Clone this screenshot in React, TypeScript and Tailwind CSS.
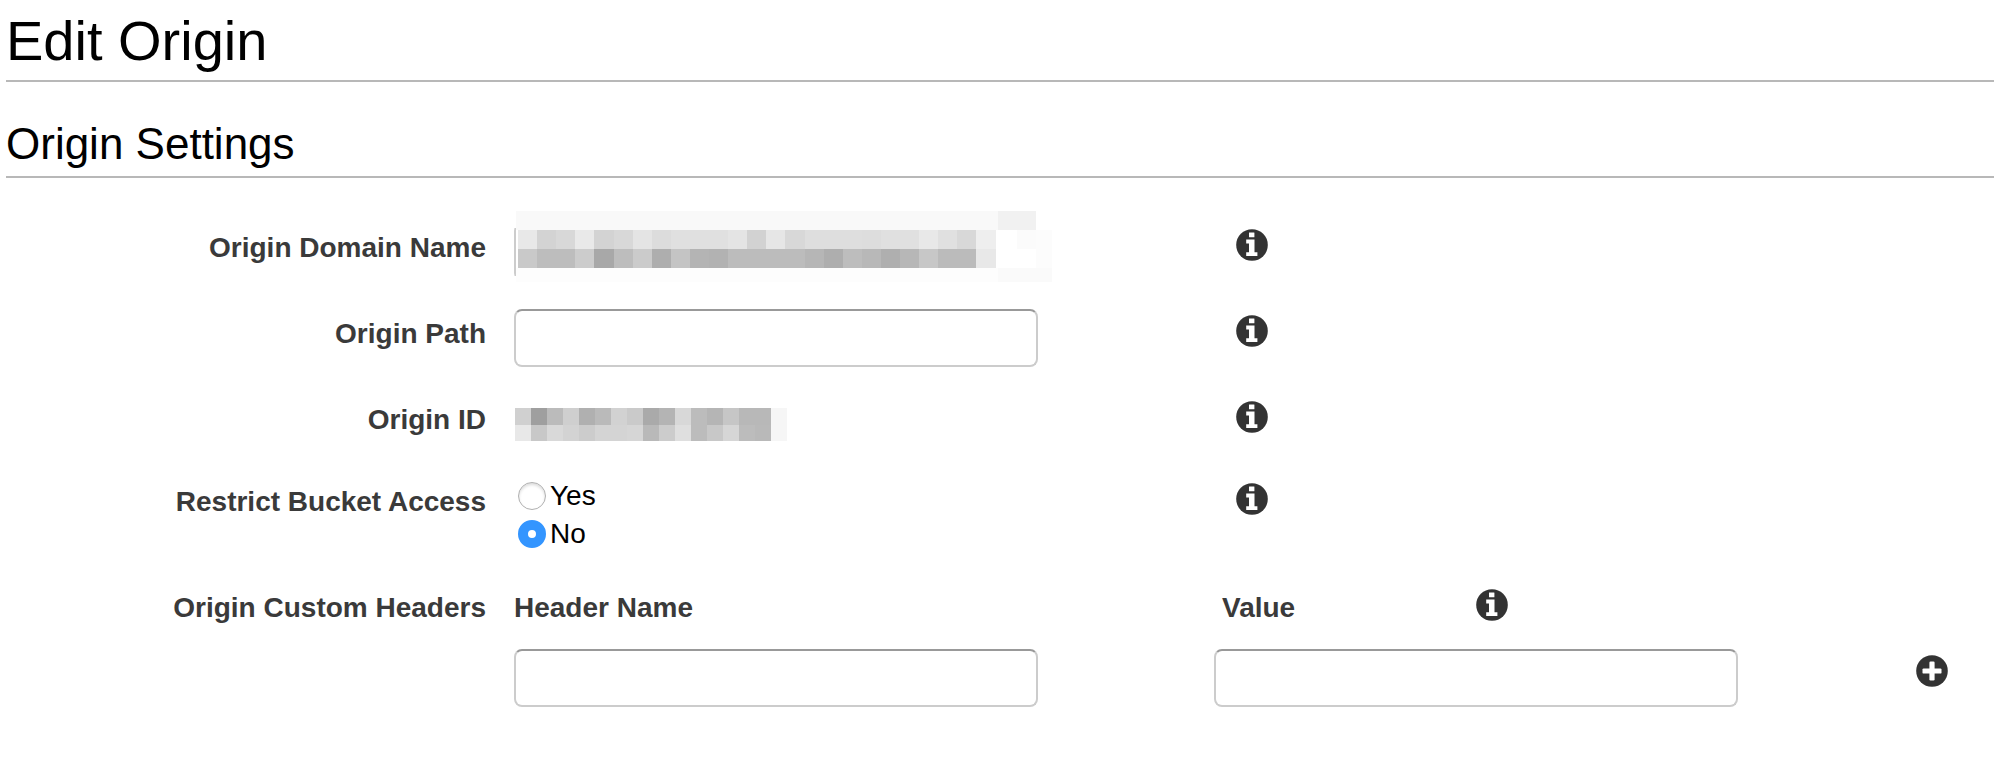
import React, { useState } from "react";

const domainCells = [
  ["e8", "d3", "d8", "e9", "d3", "d8", "e4", "dc", "e0", "e0", "e0", "e4", "d2", "e6", "d8", "de", "de", "de", "dd", "e0", "e0", "e8", "e0", "d8", "ee"],
  ["c9", "bd", "bd", "cc", "a8", "bd", "cb", "ae", "c4", "b4", "b2", "bc", "bc", "bc", "bc", "b6", "ae", "bd", "b8", "af", "b7", "c7", "bb", "bb", "e8"],
];

const idCells = [
  ["d0", "9f", "bb", "cf", "b0", "ba", "d2", "ca", "aa", "b4", "d8", "bc", "b5", "c6", "b8", "b8", "f6"],
  ["e8", "c8", "d9", "d3", "cc", "d4", "d4", "d6", "b9", "cc", "df", "bc", "c8", "d6", "bc", "b9", "f6"],
];

type CellsProps = { rows: string[][]; x: number; y: number; w: number; h: number };

function Cells({ rows, x, y, w, h }: CellsProps) {
  return (
    <g shapeRendering="crispEdges">
      {rows.map((row, r) =>
        row.map((c, i) => (
          <rect key={`${r}-${i}`} x={x + i * w} y={y + r * h} width={w} height={h} fill={`#${c}${c}${c}`} />
        ))
      )}
    </g>
  );
}

function InfoButton({ label }: { label: string }) {
  return (
    <button type="button" aria-label={label} className="block w-8 h-8 shrink-0">
      <svg viewBox="0 0 32 32" className="w-8 h-8">
        <circle cx="16" cy="16" r="15.8" fill="#333" />
        <rect x="13" y="3.4" width="5.4" height="4.8" rx="0.3" fill="#fff" />
        <path d="M10.2 10.6H18.5V23.2H21.4V27H10.2V23.2H13V14.4H10.2z" fill="#fff" />
      </svg>
    </button>
  );
}

function AddButton() {
  return (
    <button type="button" aria-label="Add header" className="block w-8 h-8 shrink-0">
      <svg viewBox="0 0 32 32" className="w-8 h-8">
        <circle cx="16" cy="16" r="15.8" fill="#333" />
        <rect x="6.5" y="13.4" width="19" height="5.2" rx="1.2" fill="#fff" />
        <rect x="13.4" y="6.5" width="5.2" height="19" rx="1.2" fill="#fff" />
      </svg>
    </button>
  );
}

const rowClass = "grid grid-cols-[480fr_672fr_780fr] gap-x-7";
const labelClass = "block pt-1 leading-[42px] font-bold text-[#3a3a3a]";
const inputClass =
  "block w-full max-w-[524px] h-[58px] px-3 bg-white border-2 border-[#ccc] border-t-[#999] rounded-lg outline-none";
const radioClass =
  "appearance-none w-7 h-7 rounded-full border border-[#b0b0b0] bg-white shadow-[inset_0_2px_3px_#ddd] checked:border-[10px] checked:border-[#3395ff] checked:shadow-none";

export default function App() {
  const [restrict, setRestrict] = useState("no");

  return (
    <main className="w-full bg-white pl-[6px] pb-10 text-[28px] text-black font-['Liberation_Sans',Arial,sans-serif]">
      <h1 className="pt-[9px] pb-[7px] text-[56px] leading-[64px] border-b-2 border-[#b8b8b8]">Edit Origin</h1>
      <h2 className="mt-9 pb-[6px] text-[44px] leading-[52px] border-b-2 border-[#b8b8b8]">Origin Settings</h2>

      <form className="mt-[45px] flex flex-col gap-7" onSubmit={(e) => e.preventDefault()}>
        <div className={rowClass}>
          <label htmlFor="domain" className={`${labelClass} text-right`}>Origin Domain Name</label>
          <div className="relative min-w-0">
            <input id="domain" type="text" readOnly className={inputClass} />
            {/* covers the value of the field */}
            <svg width="542" height="72" className="absolute left-0 -top-3 pointer-events-none">
              <path d="M0 0H542V72H0V65H2V17H0z" fill="#fff" />
              <rect x="2" y="0" width="482" height="19" fill="#f9f9f9" />
              <rect x="484" y="0" width="38" height="19" fill="#f1f1f1" />
              <rect x="2" y="57" width="482" height="14" fill="#fdfdfd" />
              <rect x="503" y="19" width="19" height="19" fill="#fbfbfb" />
              <rect x="522" y="19" width="16" height="38" fill="#fcfcfc" />
              <rect x="484" y="57" width="54" height="14" fill="#fafafa" />
              <Cells rows={domainCells} x={4} y={19} w={19.1} h={19} />
            </svg>
          </div>
          <div className="pt-[6px] pl-[22px]">
            <InfoButton label="About origin domain name" />
          </div>
        </div>

        <div className={rowClass}>
          <label htmlFor="path" className={`${labelClass} text-right`}>Origin Path</label>
          <div className="min-w-0">
            <input id="path" type="text" className={inputClass} />
          </div>
          <div className="pt-[6px] pl-[22px]">
            <InfoButton label="About origin path" />
          </div>
        </div>

        <div className={`${rowClass} h-[54px]`}>
          <span className={`${labelClass} text-right`}>Origin ID</span>
          <div className="pt-[13px] min-w-0">
            <svg width="274" height="33">
              <Cells rows={idCells} x={1} y={0} w={16} h={16.5} />
            </svg>
          </div>
          <div className="pt-[6px] pl-[22px]">
            <InfoButton label="About origin ID" />
          </div>
        </div>

        <div className={`${rowClass} h-[78px]`} role="radiogroup" aria-labelledby="restrict">
          <span id="restrict" className={`${labelClass} text-right`}>Restrict Bucket Access</span>
          <div className="pl-1 min-w-0">
            <label className="flex items-center gap-1 h-[38px] w-fit">
              <input
                type="radio"
                name="restrict"
                checked={restrict === "yes"}
                onChange={() => setRestrict("yes")}
                className={radioClass}
              />
              Yes
            </label>
            <label className="flex items-center gap-1 h-[38px] w-fit">
              <input
                type="radio"
                name="restrict"
                checked={restrict === "no"}
                onChange={() => setRestrict("no")}
                className={radioClass}
              />
              No
            </label>
          </div>
          <div className="pt-[6px] pl-[22px]">
            <InfoButton label="About restrict bucket access" />
          </div>
        </div>

        <div className={`${rowClass} gap-y-5`}>
          <span className={`${labelClass} text-right`}>Origin Custom Headers</span>
          <label htmlFor="header-name" className={labelClass}>Header Name</label>
          <div className="flex">
            <label htmlFor="header-value" className={`${labelClass} pl-2 w-[262px]`}>Value</label>
            <div className="pt-[6px]">
              <InfoButton label="About origin custom headers" />
            </div>
          </div>
          <div className="col-start-2 min-w-0">
            <input id="header-name" type="text" className={inputClass} />
          </div>
          <div className="flex justify-between pr-[46px] min-w-0">
            <input id="header-value" type="text" className={inputClass} />
            <div className="pt-[6px]">
              <AddButton />
            </div>
          </div>
        </div>
      </form>
    </main>
  );
}
